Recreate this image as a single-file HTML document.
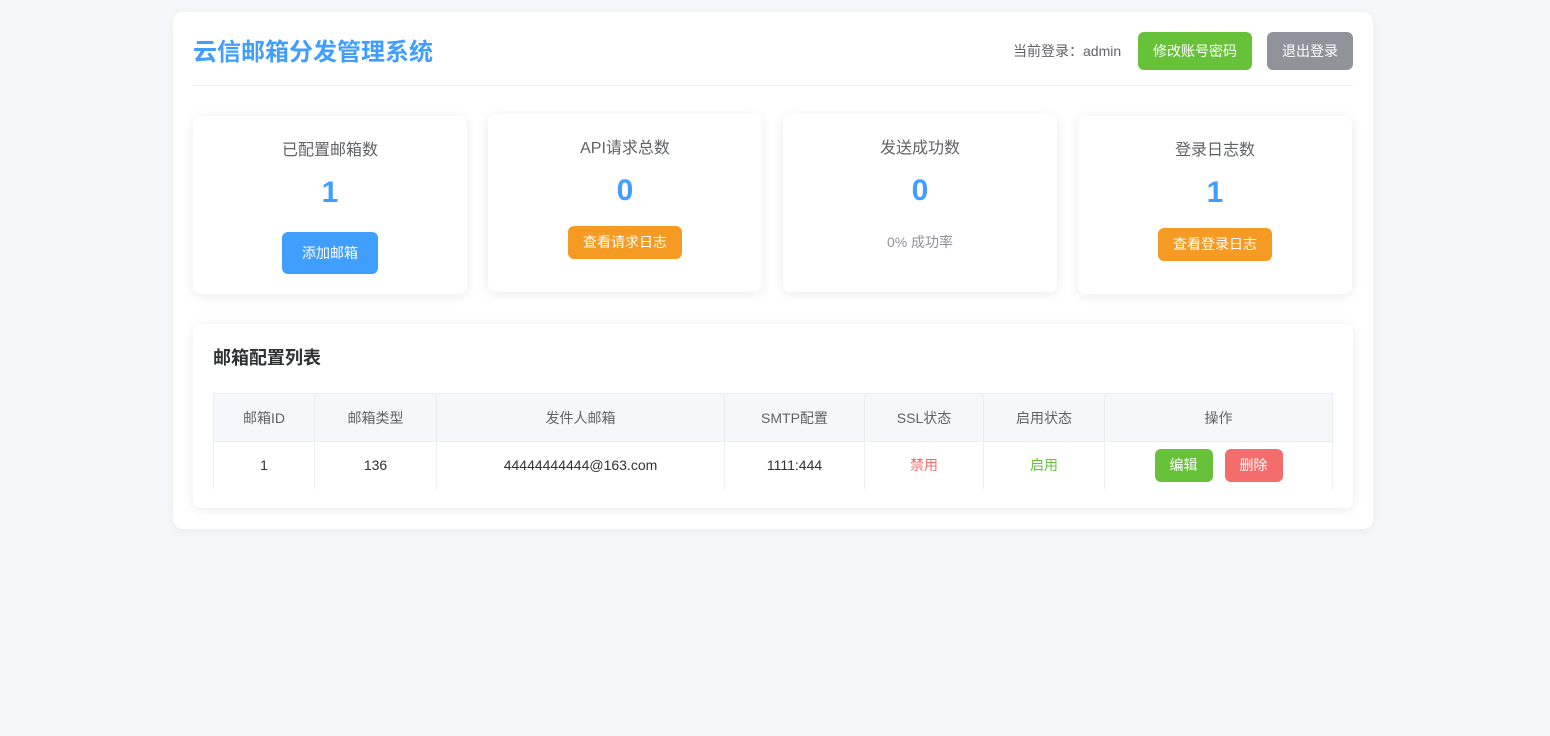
<!DOCTYPE html>
<html><head><meta charset="utf-8"><style>
*{box-sizing:border-box;margin:0;padding:0}
body{width:1550px;height:736px;background:#f5f7fa;font-family:"Liberation Sans","Noto Sans CJK SC",sans-serif;color:#303133;position:relative;overflow:hidden}
.wrap{position:absolute;left:173px;top:12px;width:1200px;height:517px;background:#fff;border-radius:10px;box-shadow:0 2px 12px rgba(0,0,0,.05)}
.title{position:absolute;left:20px;top:20px;font-size:24px;font-weight:bold;color:#409eff}
.hr{position:absolute;left:20px;right:20px;top:73px;border-top:1px solid #ebeef5}
.user{position:absolute;left:840px;top:29px;font-size:14px;color:#606266}
.btn{position:absolute;color:#fff;font-size:14px;border-radius:6px;text-align:center}
.card{position:absolute;width:274px;height:178px;background:#fff;border-radius:8px;box-shadow:0 2px 12px rgba(0,0,0,.08);text-align:center}
.card .l{position:absolute;left:0;right:0;top:20px;font-size:16px;color:#606266}
.card .n{position:absolute;left:0;right:0;top:60px;font-size:30px;font-weight:bold;color:#409eff}
.card .btn{position:relative;display:inline-block;margin-top:116px}
.list{position:absolute;left:20px;top:312px;width:1160px;height:184px;background:#fff;border-radius:8px;box-shadow:0 2px 12px rgba(0,0,0,.08)}
.list h3{position:absolute;left:20px;top:20px;font-size:18px;font-weight:bold}
table{position:absolute;left:20px;top:69px;width:1120px;border-collapse:collapse;font-size:14px}
td,th{border:1px solid #ebeef5;text-align:center;font-weight:normal}
th{background:#f5f7fa;color:#606266;height:48px}
td{height:47px;border-bottom:none;color:#303133}
</style></head><body>
<div class="wrap">
<div class="title">云信邮箱分发管理系统</div>
<div class="user">当前登录：admin</div>
<div class="btn" style="left:965px;top:20px;width:114px;height:38px;line-height:38px;background:#67c23a">修改账号密码</div>
<div class="btn" style="left:1094px;top:20px;width:86px;height:38px;line-height:38px;background:#909399">退出登录</div>
<div class="hr"></div>
<div class="card" style="left:20px;top:104px"><div class="l">已配置邮箱数</div><div class="n">1</div><div class="btn" style="width:96px;height:42px;line-height:42px;background:#409eff">添加邮箱</div></div>
<div class="card" style="left:315px;top:102px"><div class="l">API请求总数</div><div class="n">0</div><div class="btn" style="width:114px;height:33px;line-height:33px;background:#f59a23;margin-top:112px">查看请求日志</div></div>
<div class="card" style="left:610px;top:102px"><div class="l">发送成功数</div><div class="n">0</div><div style="position:absolute;left:0;right:0;top:118px;font-size:14px;color:#909399">0% 成功率</div></div>
<div class="card" style="left:905px;top:104px"><div class="l">登录日志数</div><div class="n">1</div><div class="btn" style="width:114px;height:33px;line-height:33px;background:#f59a23;margin-top:112px">查看登录日志</div></div>
<div class="list"><h3>邮箱配置列表</h3>
<table><tr><th style="width:101px">邮箱ID</th><th style="width:122px">邮箱类型</th><th style="width:288px">发件人邮箱</th><th style="width:140px">SMTP配置</th><th style="width:119px">SSL状态</th><th style="width:121px">启用状态</th><th>操作</th></tr>
<tr><td>1</td><td>136</td><td>44444444444@163.com</td><td>1111:444</td><td style="color:#f56c6c">禁用</td><td style="color:#67c23a">启用</td><td><span style="display:inline-block;width:58px;height:33px;line-height:33px;background:#67c23a;color:#fff;border-radius:6px;margin-right:12px">编辑</span><span style="display:inline-block;width:58px;height:33px;line-height:33px;background:#f56c6c;color:#fff;border-radius:6px">删除</span></td></tr></table>
</div>
</div>
</body></html>
